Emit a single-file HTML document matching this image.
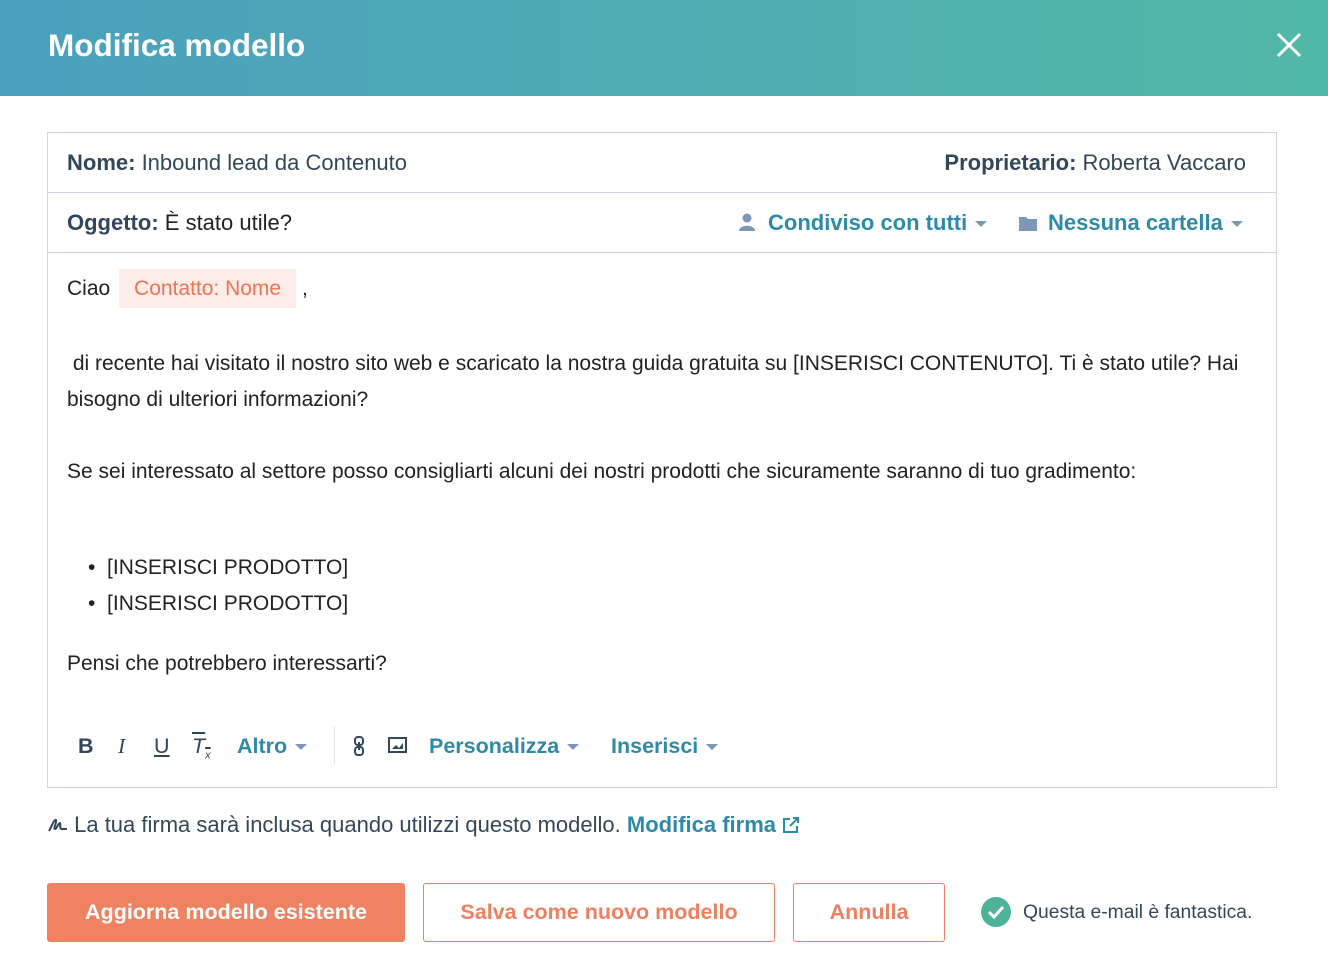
<!DOCTYPE html>
<html><head><meta charset="utf-8"><style>
*{box-sizing:border-box;margin:0;padding:0}
body{width:1328px;height:970px;background:#fff;font-family:"Liberation Sans",sans-serif;color:#33475b;position:relative;overflow:hidden}
.hdr{position:absolute;left:0;top:0;width:1328px;height:96px;background:linear-gradient(90deg,#4aa0be,#52b8a6)}
.hdr h1{position:absolute;left:48px;top:27px;font-size:31.5px;font-weight:bold;color:#fff}
.box{position:absolute;left:47px;top:132px;width:1230px;height:656px;border:1px solid #cbd6e2}
.row{position:absolute;left:0;width:100%;border-bottom:1px solid #cbd6e2;font-size:22px}
.a{position:absolute;font-size:22px;white-space:nowrap}
.link{color:#2f8aa8;font-weight:bold}
.tri{display:inline-block;width:0;height:0;border-left:6px solid transparent;border-right:6px solid transparent;border-top:6px solid #7c98b6;vertical-align:middle;margin-left:8px}
.t{position:absolute;left:67px;font-size:21px;color:#222;white-space:nowrap}
.btn{position:absolute;top:883px;height:59px;border:1px solid #ee8061;border-radius:3px;font-size:21.5px;font-weight:bold;color:#ee8061;display:flex;align-items:center;justify-content:center}
</style></head><body>
<div class="hdr"><h1>Modifica modello</h1>
<svg style="position:absolute;left:1276px;top:32px" width="26" height="26"><path d="M2 2L24 24M24 2L2 24" stroke="#fff" stroke-width="3"/></svg></div>
<div class="box">
<div class="row" style="top:0;height:60px"><span class="a" style="left:19px;top:17px"><b>Nome:</b> Inbound lead da Contenuto</span><span class="a" style="right:30px;top:17px"><b>Proprietario:</b> Roberta Vaccaro</span></div>
<div class="row" style="top:60px;height:60px"><span class="a" style="left:19px;top:17px"><b>Oggetto:</b> <span style="color:#222">È stato utile?</span></span>
<span class="a link" style="left:690px;top:17px"><svg width="18" height="20" style="vertical-align:-2px;margin-right:12px"><circle cx="9" cy="6" r="4.5" fill="#7c98b6"/><path d="M1 19C1 12 17 12 17 19Z" fill="#7c98b6"/></svg>Condiviso con tutti<span class="tri"></span></span>
<span class="a link" style="left:970px;top:17px"><svg width="20" height="18" style="vertical-align:-2px;margin-right:10px"><path d="M1 3h7l2 2h9v12H1Z" fill="#7c98b6"/></svg>Nessuna cartella<span class="tri"></span></span></div>
</div>
<div class="t" style="top:277px">Ciao <span style="background:#fdede8;color:#ee7355;padding:8px 15px;margin-left:3px">Contatto: Nome</span> ,</div>
<div class="t" style="top:346px;line-height:36px;width:1190px;white-space:normal">&nbsp;di recente hai visitato il nostro sito web e scaricato la nostra guida gratuita su [INSERISCI CONTENUTO]. Ti è stato utile? Hai bisogno di ulteriori informazioni?</div>
<div class="t" style="top:460px">Se sei interessato al settore posso consigliarti alcuni dei nostri prodotti che sicuramente saranno di tuo gradimento:</div>
<div class="t" style="top:556px;left:88px">• &nbsp;[INSERISCI PRODOTTO]</div>
<div class="t" style="top:592px;left:88px">• &nbsp;[INSERISCI PRODOTTO]</div>
<div class="t" style="top:652px">Pensi che potrebbero interessarti?</div>
<div style="position:absolute;top:734px;left:78px;font-size:21.5px;color:#33475b">
<b style="position:absolute;left:0">B</b><i style="position:absolute;left:40px;font-family:'Liberation Serif'">I</i><u style="position:absolute;left:76px">U</u><i style="position:absolute;left:114px;text-decoration:overline">T<sub style="font-size:11px">x</sub></i>
<span class="link" style="position:absolute;left:159px;white-space:nowrap">Altro<span class="tri"></span></span>
<div style="position:absolute;left:256px;top:-8px;width:1px;height:38px;background:#dfe3eb"></div>
<svg style="position:absolute;left:275px;top:2px" width="12" height="20"><rect x="2" y="1" width="8" height="8" rx="3" fill="none" stroke="#33475b" stroke-width="2"/><rect x="2" y="11" width="8" height="8" rx="3" fill="none" stroke="#33475b" stroke-width="2"/><path d="M6 6v8" stroke="#33475b" stroke-width="2"/></svg>
<svg style="position:absolute;left:310px;top:3px" width="19" height="16"><rect x="1" y="1" width="17" height="14" fill="none" stroke="#33475b" stroke-width="2"/><path d="M4 12l4-4 3 3 4-5v6Z" fill="#33475b"/></svg>
<span class="link" style="position:absolute;left:351px;white-space:nowrap">Personalizza<span class="tri"></span></span>
<span class="link" style="position:absolute;left:533px;white-space:nowrap">Inserisci<span class="tri"></span></span>
</div>
<div style="position:absolute;top:812px;left:48px;font-size:22px;white-space:nowrap"><svg width="20" height="16" style="vertical-align:-1px"><path d="M1 14C4 9 6 2 8 3C9 5 5 12 7 12C9 12 10 6 12 6C13 8 11 12 14 12H19" stroke="#33475b" stroke-width="2" fill="none"/></svg> La tua firma sarà inclusa quando utilizzi questo modello. <span class="link">Modifica firma</span> <svg width="18" height="18" style="vertical-align:-2px"><path d="M8 3H2v13h13v-6M11 2h5v5M16 2L8 10" stroke="#2f8aa8" stroke-width="2" fill="none"/></svg></div>
<div class="btn" style="left:47px;width:358px;background:#ef8361;color:#fff">Aggiorna modello esistente</div>
<div class="btn" style="left:423px;width:352px">Salva come nuovo modello</div>
<div class="btn" style="left:793px;width:152px">Annulla</div>
<div style="position:absolute;left:981px;top:897px;font-size:19.3px;white-space:nowrap"><svg width="30" height="30" style="vertical-align:-9px;margin-right:12px"><circle cx="15" cy="15" r="15" fill="#4fb39a"/><path d="M8 15l5 5 9-10" stroke="#fff" stroke-width="3" fill="none"/></svg>Questa e-mail è fantastica.</div>
</body></html>
